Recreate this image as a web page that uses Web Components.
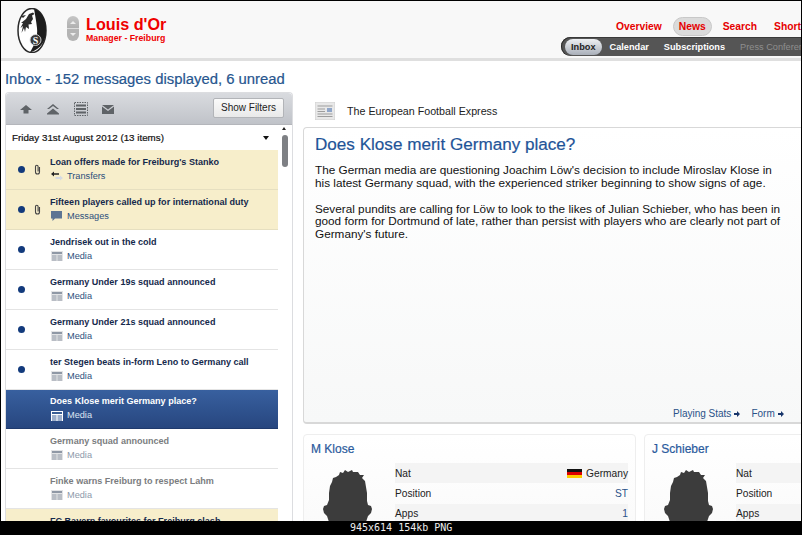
<!DOCTYPE html>
<html>
<head>
<meta charset="utf-8">
<title>Inbox</title>
<style>
  html, body { margin: 0; padding: 0; background: #000; }
  body { width: 802px; height: 535px; overflow: hidden; font-family: "Liberation Sans", Arial, sans-serif; }
  fm-app { width: 802px; height: 535px; }
</style>
</head>
<body>
<fm-app>
  <fm-header slot="header"></fm-header>
  <fm-inbox slot="left" heading="Friday 31st August 2012 (13 items)">
    <fm-message unread clip tint title-text="Loan offers made for Freiburg's Stanko" kind="transfers" label="Transfers"></fm-message>
    <fm-message unread clip tint title-text="Fifteen players called up for international duty" kind="messages" label="Messages"></fm-message>
    <fm-message unread title-text="Jendrisek out in the cold" kind="media" label="Media"></fm-message>
    <fm-message unread title-text="Germany Under 19s squad announced" kind="media" label="Media"></fm-message>
    <fm-message unread title-text="Germany Under 21s squad announced" kind="media" label="Media"></fm-message>
    <fm-message unread title-text="ter Stegen beats in-form Leno to Germany call" kind="media" label="Media"></fm-message>
    <fm-message selected title-text="Does Klose merit Germany place?" kind="media" label="Media"></fm-message>
    <fm-message read title-text="Germany squad announced" kind="media" label="Media"></fm-message>
    <fm-message read title-text="Finke warns Freiburg to respect Lahm" kind="media" label="Media"></fm-message>
    <fm-message tint title-text="FC Bayern favourites for Freiburg clash" kind="media" label="Media"></fm-message>
  </fm-inbox>
  <fm-article slot="right" source="The European Football Express" heading="Does Klose merit Germany place?">
    <p>The German media are questioning Joachim Löw's decision to include Miroslav Klose in his latest Germany squad, with the experienced striker beginning to show signs of age.</p>
    <p>Several pundits are calling for Löw to look to the likes of Julian Schieber, who has been in good form for Dortmund of late, rather than persist with players who are clearly not part of Germany's future.</p>
  </fm-article>
  <fm-player slot="cards" name="M Klose" nat="Germany" flag pos="ST" apps="1"></fm-player>
  <fm-player slot="cards" name="J Schieber" nat="Germany" flag pos="ST" apps="0"></fm-player>
</fm-app>

<script>
// Shared little icons, all drawn by hand on a 12x10 box
const ICONS = {
  media: (fg, bg) => `<svg width="12" height="10" viewBox="0 0 12 10"><rect width="12" height="10" fill="${bg}"/><rect x="1" y="1" width="10" height="2" fill="${fg}"/><path d="M1 5h4.500M6.500 5H11M1 7h4.500M6.500 7H11M1 9h4.500M6.500 9H11" stroke="${fg}" stroke-width="1"/></svg>`,
  messages: () => `<svg width="12" height="10" viewBox="0 0 12 10"><path d="M0 0h11v7.500H4L1.500 10V7.500H0z" fill="#5d7593"/></svg>`,
  transfers: () => `<svg width="12" height="10" viewBox="0 0 12 10"><path d="M0 3 3 .5v1.700h5v1.600H3V5.500z" fill="#222"/><path d="M12 7 9 4.500V6H4.500v2H9v1.500z" fill="#d5dae2"/></svg>`
};

class FmApp extends HTMLElement {
  constructor() {
    super();
    this.attachShadow({ mode: 'open' }).innerHTML = `
      <style>
        :host { display: flex; flex-direction: column; background: #000; }
        .frame { height: 520px; margin: 1px 1px 0 1px; background: #fff; overflow: hidden; display: flex; flex-direction: column; flex: none; }
        h1 { margin: 8px 0 0 4px; height: 23px; font: 400 14.850px/21px "Liberation Sans", Arial, sans-serif; color: #27568f; -webkit-text-stroke: .2px #27568f; white-space: nowrap; flex: none; }
        .cols { display: flex; margin-left: 4px; gap: 10px; flex: 1; min-height: 0; }
        .left { width: 288px; flex: none; }
        .right { width: 560px; flex: none; display: flex; flex-direction: column; }
        .cards { display: flex; gap: 8px; margin-top: 10px; }
        .caption { height: 14px; color: #eee; font: 10px/14px "DejaVu Sans Mono", monospace; padding-left: 350px; white-space: nowrap; }
      </style>
      <div class="frame">
        <slot name="header"></slot>
        <h1>Inbox - 152 messages displayed, 6 unread</h1>
        <div class="cols">
          <div class="left"><slot name="left"></slot></div>
          <div class="right">
            <slot name="right"></slot>
            <div class="cards"><slot name="cards"></slot></div>
          </div>
        </div>
      </div>
      <div class="caption">945x614 154kb PNG</div>`;
  }
}

class FmHeader extends HTMLElement {
  constructor() {
    super();
    this.attachShadow({ mode: 'open' }).innerHTML = `
      <style>
        :host { display: flex; height: 57px; flex: none; background: #f8f8f8; border-bottom: 3px solid #dfdfdf; box-sizing: content-box; font-family: "Liberation Sans", Arial, sans-serif; }
        .crest { margin: 7px 0 0 16px; width: 30px; height: 45px; flex: none; }
        .arrows { margin: 15px 0 0 20px; width: 12px; height: 25px; border-radius: 6px; background: linear-gradient(#c6c6c6, #b0b0b0 48%, #dcdcdc 50%, #b4b4b4 54%); display: flex; flex-direction: column; align-items: center; justify-content: space-around; flex: none; }
        .arrows i { display: block; width: 0; height: 0; border-left: 3px solid transparent; border-right: 3px solid transparent; }
        .arrows i:first-child { border-bottom: 3px solid #ececec; }
        .arrows i:last-child { border-top: 3px solid #ececec; }
        .who { margin: 14px 0 0 7px; color: #ef0000; flex: none; width: 475px; }
        .who b { display: block; font: 700 16.200px/18px "Liberation Sans", Arial, sans-serif; }
        .who span { display: block; font: 700 8.750px/10px "Liberation Sans", Arial, sans-serif; }
        .menus { flex: none; width: 241px; display: flex; flex-direction: column; padding-top: 15px; }
        .top { display: flex; align-items: center; height: 21px; padding-left: 55px; color: #e60000; font: 700 10.300px/20px "Liberation Sans", Arial, sans-serif; white-space: nowrap; }
        .top a { margin-right: 11px; }
        .top a.on { background: #dbdbdb; border: 1px solid #c8c8c8; border-radius: 10px; padding: 0 5px; line-height: 17px; height: 17px; }
        .top a.gap { margin-right: 17px; }
        .sub { height: 19px; background: #555; border-radius: 10px 0 0 10px; display: flex; align-items: center; padding-left: 3px; color: #fff; font: 700 9.200px/20px "Liberation Sans", Arial, sans-serif; white-space: nowrap; box-shadow: inset 1px 0 0 #2a2a2a, inset 0 1px 0 #3a3a3a; overflow: hidden; }
        .sub a { margin-right: 15px; }
        .sub a.on { background: linear-gradient(#eef0f3, #a9afb9); color: #222; border-radius: 9px; height: 16px; line-height: 16px; padding: 0 6px; margin: 0 8px 0 1px; }
        .sub a.off { color: #8e8e8e; font-weight: 400; }
      </style>
      <svg class="crest" viewBox="0 0 30 45">
        <ellipse cx="15" cy="22.500" rx="14" ry="22" fill="#fff" stroke="#2a2a2a" stroke-width="1.500"/>
        <path d="M17 1C25 3 29 12 29 22.500S24 41 13 44.400C18 36 21 28 20 20 19 12 18 6 17 1z" fill="#1d1d1d"/>
        <path d="M12 6l4-1.500 1.500 1.500-2.500 1.500L16 11l-2 3 1 2-3.500.5L12 21l-3-2-1 5-1-4-2.500 5L6 18l-2.500 2L6 15l-2 0L9 11z" fill="#2b2b2b"/>
        <path d="M4 8l5-1-3 3z" fill="#2b2b2b"/>
        <circle cx="18.500" cy="32" r="5.500" fill="#3a3a3a" stroke="#ddd" stroke-width=".9"/>
        <text x="18.500" y="35.500" text-anchor="middle" font-family="Liberation Serif, serif" font-size="10" font-weight="700" fill="#fff">S</text>
      </svg>
      <div class="arrows"><i></i><i></i></div>
      <div class="who"><b>Louis d'Or</b><span>Manager - Freiburg</span></div>
      <div class="menus">
        <div class="top"><a>Overview</a><a class="on">News</a><a class="gap">Search</a><a>Shortlist</a></div>
        <div class="sub"><a class="on">Inbox</a><a>Calendar</a><a>Subscriptions</a><a class="off">Press Conferences</a></div>
      </div>`;
  }
}

class FmInbox extends HTMLElement {
  constructor() {
    super();
    const grey = '#5f6367';
    this.attachShadow({ mode: 'open' }).innerHTML = `
      <style>
        :host { display: flex; flex-direction: column; height: 100%; font-family: "Liberation Sans", Arial, sans-serif; background: #fff; border: 1px solid #dcdde0; border-bottom: 0; box-sizing: border-box; border-radius: 4px 4px 0 0; }
        .bar { height: 32px; flex: none; background: linear-gradient(#d9dbdf, #bfc2c8); border-radius: 4px 4px 0 0; display: flex; align-items: center; padding: 0 8px 0 14px; box-shadow: inset 0 -1px 0 #b4b6bb; }
        .bar svg { margin-right: 15px; flex: none; }
        button { margin-left: auto; width: 71px; height: 20px; padding: 0; font: 400 10px/18px "Liberation Sans", Arial, sans-serif; color: #222; background: linear-gradient(#fafafa, #e9e9e9); border: 1px solid #b2b4b8; border-radius: 2px; position: relative; top: -1px; }
        .body { flex: 1; display: flex; min-height: 0; }
        .list { width: 272px; flex: none; display: flex; flex-direction: column; overflow: hidden; }
        .day { height: 25px; flex: none; display: flex; align-items: center; justify-content: space-between; padding: 0 9px 0 6px; font: 400 9.800px/25px "Liberation Sans", Arial, sans-serif; color: #111; -webkit-text-stroke: .2px #111; box-sizing: border-box; }
        .day i { width: 0; height: 0; border-left: 3.500px solid transparent; border-right: 3.500px solid transparent; border-top: 4px solid #111; }
        .scroll { flex: 1; display: flex; flex-direction: column; align-items: center; padding: 2px 2px 0 0; }
        .scroll i { width: 0; height: 0; border-left: 2.500px solid transparent; border-right: 2.500px solid transparent; border-bottom: 3px solid #222; margin-bottom: 5px; }
        .scroll b { display: block; width: 6px; height: 32px; border-radius: 3px; background: #7e8084; margin-left: 1px; }
      </style>
      <div class="bar">
        <svg width="12" height="10" viewBox="0 0 12 10"><path d="M6 1l6 5H8.500v3.500h-5V6H0z" fill="${grey}"/></svg>
        <svg width="12" height="11" viewBox="0 0 12 11"><path d="M6 0l6 5h-2L6 2 2 5H0zM6 4.500l6 5v1H0v-1z" fill="${grey}"/></svg>
        <svg width="14" height="14" viewBox="0 0 14 14" style="margin-right:14px"><rect x=".5" y=".5" width="13" height="13" fill="none" stroke="${grey}" stroke-dasharray="1.500 1"/><path d="M2 3.500h10M2 7h10M2 10.500h10" stroke="${grey}" stroke-width="2"/></svg>
        <svg width="12" height="9" viewBox="0 0 12 9"><path d="M0 0h12L6 4.500z" fill="${grey}"/><path d="M0 1.500l6 4.500 6-4.500V9H0z" fill="${grey}"/></svg>
        <button>Show Filters</button>
      </div>
      <div class="body">
        <div class="list">
          <div class="day"><span>${this.getAttribute('heading')}</span><i></i></div>
          <slot></slot>
        </div>
        <div class="scroll"><i></i><b></b></div>
      </div>`;
  }
}

class FmMessage extends HTMLElement {
  constructor() {
    super();
    const selected = this.hasAttribute('selected');
    const kind = this.getAttribute('kind');
    let icon;
    if (kind === 'media') {
      icon = selected ? ICONS.media('#3a5f96', '#fff') : ICONS.media('#8f98a5', '#e2e3e5');
    } else {
      icon = ICONS[kind]();
    }
    this.attachShadow({ mode: 'open' }).innerHTML = `
      <style>
        :host { display: grid; grid-template-columns: 13px 18px 1fr; align-items: center; height: 40px; box-sizing: border-box; padding: 0 0 0 12px; border-bottom: 1px solid #e4e4e4; flex: none; font-family: "Liberation Sans", Arial, sans-serif; }
        :host([tint]) { background: #f7eecb; border-bottom-color: #e6dfc0; }
        :host([selected]) { background: linear-gradient(#38609f, #27467f); border-bottom-color: #1f3a6d; height: 39px; }
        .dot { width: 7px; height: 7px; border-radius: 50%; background: #123a7c; visibility: hidden; }
        :host([unread]) .dot { visibility: visible; }
        .clip { visibility: hidden; justify-self: start; margin-left: 3px; }
        :host([clip]) .clip { visibility: visible; }
        .txt { display: flex; flex-direction: column; grid-column: 3; padding: 0 0 1px 1px; gap: 1px; min-width: 0; }
        .t { font: 700 9.050px/13px "Liberation Sans", Arial, sans-serif; color: #15294c; white-space: nowrap; }
        .s { display: flex; align-items: center; gap: 4px; padding-left: 1px; font: 400 9.200px/13px "Liberation Sans", Arial, sans-serif; color: #2d4f7c; height: 13px; }
        .s svg { flex: none; }
        :host([selected]) .t { color: #fff; }
        :host([selected]) .s { color: #dde5f2; }
        :host([read]) .t { color: #7b7d80; }
        :host([read]) .s { color: #8d99aa; }
      </style>
      <span class="dot"></span>
      <svg class="clip" width="7" height="11" viewBox="0 0 7 11"><path d="M5.500 3v5a2 2 0 0 1-4 0V2.500a1.300 1.300 0 0 1 2.600 0V7.500" fill="none" stroke="#444" stroke-width="1.100"/></svg>
      <div class="txt">
        <div class="t">${this.getAttribute('title-text')}</div>
        <div class="s">${icon}<span>${this.getAttribute('label')}</span></div>
      </div>`;
  }
}

class FmArticle extends HTMLElement {
  constructor() {
    super();
    this.attachShadow({ mode: 'open' }).innerHTML = `
      <style>
        :host { display: flex; flex-direction: column; flex: none; font-family: "Liberation Sans", Arial, sans-serif; }
        .src { display: flex; align-items: center; height: 35px; gap: 12px; padding: 3px 0 0 12px; font-size: 10.700px; color: #222; flex: none; box-sizing: border-box; }
        .card { height: 297px; box-sizing: border-box; width: 540px; background: linear-gradient(#fff, #f7f8f8); border: 1px solid #d8d8d8; border-bottom-width: 2px; border-radius: 4px 0 0 4px; padding: 5px 11px 0; display: flex; flex-direction: column; }
        h2 { margin: 0 0 7px; font: 400 17.100px/24px "Liberation Sans", Arial, sans-serif; color: #1f5498; -webkit-text-stroke: .2px #1f5498; white-space: nowrap; }
        .text { width: 470px; flex: 1; font-size: 11.750px; line-height: 12.700px; color: #111; }
        ::slotted(p) { margin: 0 0 13.300px; }
        .links { display: flex; gap: 11px; padding: 0 0 3px 358px; font-size: 10px; color: #2a5288; white-space: nowrap; align-items: center; }
        .links svg { margin-left: 3px; }
      </style>
      <div class="src">
        <svg width="20" height="18" viewBox="0 0 20 18"><rect width="20" height="18" fill="#e8e8e8" stroke="#d0d0d0"/><path d="M2.500 4h15M2.500 7h7.500M2.500 9.500h7.500M2.500 12h15M2.500 14.500h15" stroke="#9d9d9d" stroke-width="1"/><rect x="12" y="6" width="5" height="4" fill="#8fa5c8"/></svg>
        <span>${this.getAttribute('source')}</span>
      </div>
      <div class="card">
        <h2>${this.getAttribute('heading')}</h2>
        <div class="text"><slot></slot></div>
        <div class="links">
          <span>Playing Stats<svg width="6" height="6" viewBox="0 0 6 6"><path d="M0 2h3V0l3 3-3 3V4H0z" fill="#17356b"/></svg></span>
          <span>Form<svg width="6" height="6" viewBox="0 0 6 6"><path d="M0 2h3V0l3 3-3 3V4H0z" fill="#17356b"/></svg></span>
        </div>
      </div>`;
  }
}

class FmPlayer extends HTMLElement {
  constructor() {
    super();
    const flag = `<svg width="15" height="9" viewBox="0 0 15 9"><rect width="15" height="3" fill="#111"/><rect y="3" width="15" height="3" fill="#d00"/><rect y="6" width="15" height="3" fill="#fc0"/></svg>`;
    this.attachShadow({ mode: 'open' }).innerHTML = `
      <style>
        :host { display: block; width: 333px; height: 100px; flex: none; font-family: "Liberation Sans", Arial, sans-serif; box-sizing: border-box; background: linear-gradient(#fff, #fafafa); border: 1px solid #eee; border-radius: 4px; padding: 7px 7px 0 7px; }
        h3 { margin: 0 0 6px; font: 400 12px/15px "Liberation Sans", Arial, sans-serif; color: #2a5a9c; -webkit-text-stroke: .2px #2a5a9c; }
        .row { display: grid; grid-template-columns: 84px 1fr; }
        .head { width: 52px; height: 60px; margin: 3px 0 0 12px; }
        .tbl { display: flex; flex-direction: column; font-size: 10.200px; color: #222; }
        .tbl div { height: 20.300px; display: flex; align-items: center; justify-content: space-between; }
        .tbl div:nth-child(odd) { background: #f4f4f4; }
        .v { display: flex; align-items: center; gap: 4px; }
        .blue { color: #2a5288; }
      </style>
      <h3>${this.getAttribute('name')}</h3>
      <div class="row">
        <svg class="head" viewBox="0 0 52 60"><path d="M13 11l3-2 1-3 3 1 2-3 3 2 4-2 1 2 5 0 2 3 4 0-2 3 3 3 1 6 1 6 0 8 1 4 3 1 1 3-1 4-3 3-2 6H6l-2-6-3-3-1-4 1-3 3-1 2-5 0-7 1-7 2-4 1-4z" fill="#3c3c3c"/></svg>
        <div class="tbl">
          <div><span>Nat</span><span class="v">${flag}Germany</span></div>
          <div><span>Position</span><span class="v blue">${this.getAttribute('pos')}</span></div>
          <div><span>Apps</span><span class="v blue">${this.getAttribute('apps')}</span></div>
        </div>
      </div>`;
  }
}

customElements.define('fm-app', FmApp);
customElements.define('fm-header', FmHeader);
customElements.define('fm-inbox', FmInbox);
customElements.define('fm-message', FmMessage);
customElements.define('fm-article', FmArticle);
customElements.define('fm-player', FmPlayer);
</script>
</body>
</html>
